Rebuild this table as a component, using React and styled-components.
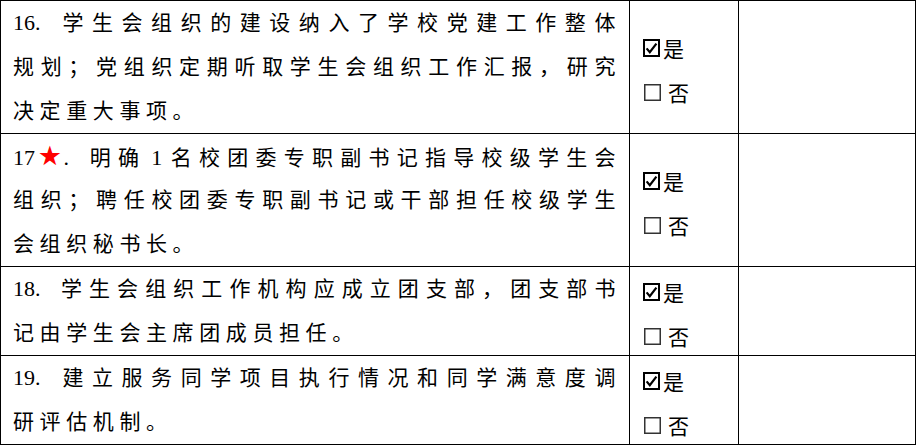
import React from "react";
import styled, { createGlobalStyle } from "styled-components";

const Global = createGlobalStyle`
  html, body { margin: 0; padding: 0; background: #ffffff; }
  body { font-family: "Liberation Serif", "Noto Sans CJK SC", serif; color: #000; }
`;

const Table = styled.table`
  border-collapse: collapse;
  table-layout: fixed;
  width: 916px;
  font-family: "Liberation Serif", "Noto Sans CJK SC", serif;
  font-size: 21px;
  color: #000;
`;

const Cell = styled.td`
  border: 1px solid #000;
  padding: 0;
  vertical-align: ${(p) => (p.$middle ? "middle" : "top")};
  width: ${(p) => p.$w}px;
`;

const TextCell = styled(Cell)`
  padding: 0 8px 0 12px;
`;

const CheckCell = styled(Cell)`
  padding: 0 0 0 13px;
`;

const Line = styled.div`
  height: 44px;
  line-height: 44px;
  white-space: nowrap;
  text-align: ${(p) => (p.$justify ? "justify" : "left")};
  text-align-last: ${(p) => (p.$justify ? "justify" : "left")};
  letter-spacing: 5.6px;
`;

const Num = styled.span`
  font-family: "Liberation Serif", serif;
  font-size: 22px;
  letter-spacing: 0;
  margin: 0 ${(p) => p.$mr || 0}px 0 ${(p) => p.$ml || 0}px;
`;

const Star = styled.span`
  color: #ff0000;
  font-family: "DejaVu Sans", sans-serif;
  font-size: 27px;
  letter-spacing: 0;
  margin-left: 1px;
`;

const OptLine = styled.div`
  height: 44px;
  box-sizing: border-box;
  padding-top: 6px;
  display: flex;
  align-items: center;
  font-family: "Noto Sans CJK SC", sans-serif;
  line-height: 24px;
`;

const BoxIcon = styled.svg`
  flex: none;
  margin-right: ${(p) => p.$gap}px;
  margin-left: ${(p) => p.$left}px;
`;

function Checked() {
  return (
    <BoxIcon $gap={3} $left={0} width="17" height="18" viewBox="0 0 17 18">
      <rect x="1" y="1" width="15" height="16" fill="none" stroke="#000" strokeWidth="2" />
      <path d="M3.6 9.4 L6.8 13.2 L13.4 4.6" fill="none" stroke="#000" strokeWidth="2.2" strokeLinejoin="miter" />
    </BoxIcon>
  );
}

function Unchecked() {
  return (
    <BoxIcon $gap={7} $left={1} width="17" height="17" viewBox="0 0 17 17">
      <rect x="0.75" y="0.75" width="15.5" height="15.5" fill="none" stroke="#333" strokeWidth="1.5" />
    </BoxIcon>
  );
}

const items = [
  {
    no: "16",
    lines: [
      "学生会组织的建设纳入了学校党建工作整体",
      "规划；党组织定期听取学生会组织工作汇报，研究",
      "决定重大事项。",
    ],
  },
  {
    no: "17",
    star: true,
    lines: [
      ["明确", "1", "名校团委专职副书记指导校级学生会"],
      "组织；聘任校团委专职副书记或干部担任校级学生",
      "会组织秘书长。",
    ],
  },
  {
    no: "18",
    lines: ["学生会组织工作机构应成立团支部，团支部书", "记由学生会主席团成员担任。"],
  },
  {
    no: "19",
    lines: ["建立服务同学项目执行情况和同学满意度调", "研评估机制。"],
  },
];

function FirstLine({ item }) {
  const body = item.lines[0];
  return (
    <>
      <Num>{item.no}</Num>
      {item.star && <Star>★</Star>}
      <Num $mr={19}>.</Num>
      {Array.isArray(body) ? (
        <>
          {body[0]}
          <Num $ml={5} $mr={7}>{body[1]}</Num>
          {body[2]}
        </>
      ) : (
        body
      )}
    </>
  );
}

export default function App() {
  return (
    <>
      <Global />
      <Table>
        <tbody>
          {items.map((item, ri) => (
            <tr key={ri}>
              <TextCell $w={608}>
                {item.lines.map((text, li) => (
                  <Line key={li} $justify={li < item.lines.length - 1}>
                    {li === 0 ? <FirstLine item={item} /> : text}
                  </Line>
                ))}
              </TextCell>
              <CheckCell $w={95} $middle>
                <OptLine>
                  <Checked />是
                </OptLine>
                <OptLine>
                  <Unchecked />否
                </OptLine>
              </CheckCell>
              <Cell $w={176} />
            </tr>
          ))}
        </tbody>
      </Table>
    </>
  );
}
